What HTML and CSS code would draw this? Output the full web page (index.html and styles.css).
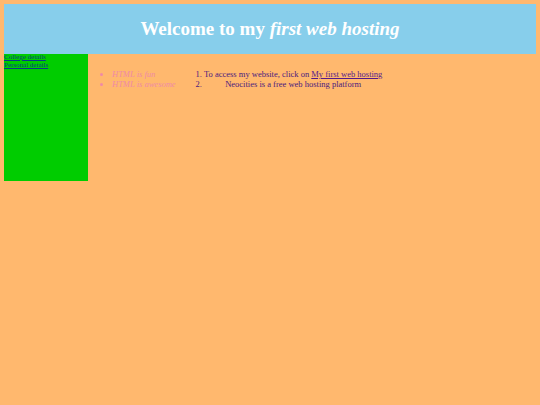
FILE: index.html
```html
<!DOCTYPE html>
<html>
<head>
<meta charset="utf-8">
<link rel="stylesheet" href="styles.css">
</head>
<body>
<header class="banner">
  <h1 class="title">Welcome to my <em>first web hosting</em></h1>
</header>
<div class="content">
  <nav class="sidebar">
    <a href="#" class="side-link">College details</a>
    <a href="#" class="side-link">Personal details</a>
  </nav>
  <main class="main">
    <ul class="fun-list">
      <li>HTML is fun</li>
      <li>HTML is awesome</li>
    </ul>
    <ol class="info-list">
      <li>To access my website, click on <a href="#" class="site-link">My first web hosting</a></li>
      <li>Neocities is a free web hosting platform</li>
    </ol>
  </main>
</div>
</body>
</html>
```

FILE: styles.css
```css
html, body {
  background: #ffb86e;
}
body {
  margin: 4px;
  font-family: "Liberation Serif", "Times New Roman", serif;
}
.banner {
  background: #87ceeb;
  height: 50px;
  display: flex;
  align-items: center;
  justify-content: center;
}
.title {
  margin: 0;
  color: #ffffff;
  font-size: 19px;
  font-weight: bold;
}
.content {
  display: flex;
  align-items: flex-start;
}
.sidebar {
  width: 84px;
  height: 127px;
  background: #00cc00;
  display: flex;
  flex-direction: column;
}
.side-link {
  font-size: 7px;
  line-height: 7.5px;
  color: #0a3a8a;
}
.main {
  display: flex;
  align-items: flex-start;
  padding-top: 15px;
  font-size: 8.5px;
  line-height: 10px;
}
.fun-list {
  margin: 0;
  padding-left: 24px;
  width: 70px;
  color: #f08aa6;
  font-style: italic;
}
.info-list {
  margin: 0;
  padding-left: 22px;
  color: #4b1a7e;
  text-align: center;
}
.site-link {
  color: #551a8b;
}
```
